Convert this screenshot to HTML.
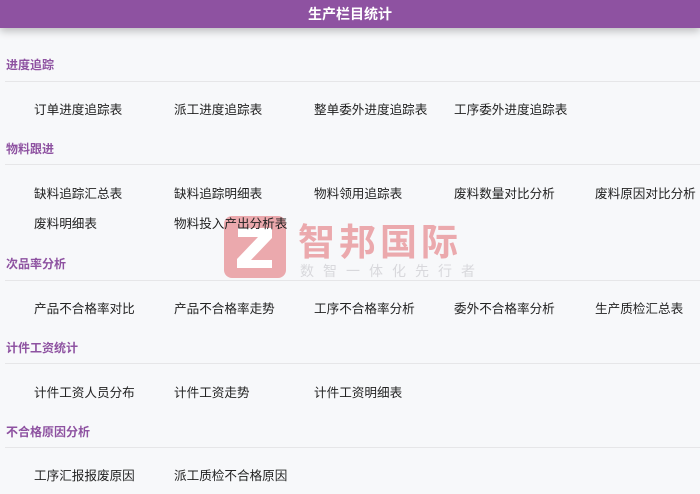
<!DOCTYPE html>
<html><head><meta charset="utf-8"><style>
body{margin:0;width:700px;height:494px;background:#f7f8fa;font-family:"Liberation Sans","Noto Sans CJK SC",sans-serif;position:relative;overflow:hidden}
.hd{position:absolute;left:0;top:0;width:700px;height:28px;background:#8e52a1;color:#fff;font-size:14px;font-weight:bold;text-align:center;line-height:28px;box-shadow:0 3px 8px rgba(0,0,0,.25)}
.t{position:absolute;left:6px;font-size:12px;color:#8e52a1;font-weight:bold}
.l{position:absolute;left:5px;width:695px;height:1px;background:#e6e6e8}
.i{position:absolute;font-size:12.6px;color:#222;margin-top:-2px}
</style></head><body>
<div class="hd">生产栏目统计</div>
<div class="t" style="top:56px">进度追踪</div><div class="l" style="top:81px"></div>
<div class="i" style="left:34px;top:101px">订单进度追踪表</div><div class="i" style="left:174px;top:101px">派工进度追踪表</div><div class="i" style="left:314px;top:101px">整单委外进度追踪表</div><div class="i" style="left:454px;top:101px">工序委外进度追踪表</div>
<div class="t" style="top:140px">物料跟进</div><div class="l" style="top:164px"></div>
<div class="i" style="left:34px;top:185px">缺料追踪汇总表</div><div class="i" style="left:174px;top:185px">缺料追踪明细表</div><div class="i" style="left:314px;top:185px">物料领用追踪表</div><div class="i" style="left:454px;top:185px">废料数量对比分析</div><div class="i" style="left:595px;top:185px">废料原因对比分析</div>
<div class="i" style="left:34px;top:215px">废料明细表</div>
<svg style="position:absolute;left:224px;top:216px" width="62" height="62"><rect width="62" height="62" rx="8" fill="#eba9ad"/><path d="M14 12H48V22L27 44H48V52H13V43L34 21H14Z" fill="#fff"/></svg>
<div style="position:absolute;left:298px;top:212px;font-size:37px;color:#eba9ad;letter-spacing:4px;font-weight:bold">智邦国际</div>
<div style="position:absolute;left:300px;top:261px;font-size:14px;color:#d8d8dc;letter-spacing:9px">数智一体化先行者</div>
<div class="i" style="left:174px;top:215px">物料投入产出分析表</div>
<div class="t" style="top:255px">次品率分析</div><div class="l" style="top:280px"></div>
<div class="i" style="left:34px;top:300px">产品不合格率对比</div><div class="i" style="left:174px;top:300px">产品不合格率走势</div><div class="i" style="left:314px;top:300px">工序不合格率分析</div><div class="i" style="left:454px;top:300px">委外不合格率分析</div><div class="i" style="left:595px;top:300px">生产质检汇总表</div>
<div class="t" style="top:339px">计件工资统计</div><div class="l" style="top:363px"></div>
<div class="i" style="left:34px;top:384px">计件工资人员分布</div><div class="i" style="left:174px;top:384px">计件工资走势</div><div class="i" style="left:314px;top:384px">计件工资明细表</div>
<div class="t" style="top:423px">不合格原因分析</div><div class="l" style="top:447px"></div>
<div class="i" style="left:34px;top:467px">工序汇报报废原因</div><div class="i" style="left:174px;top:467px">派工质检不合格原因</div>
</body></html>
